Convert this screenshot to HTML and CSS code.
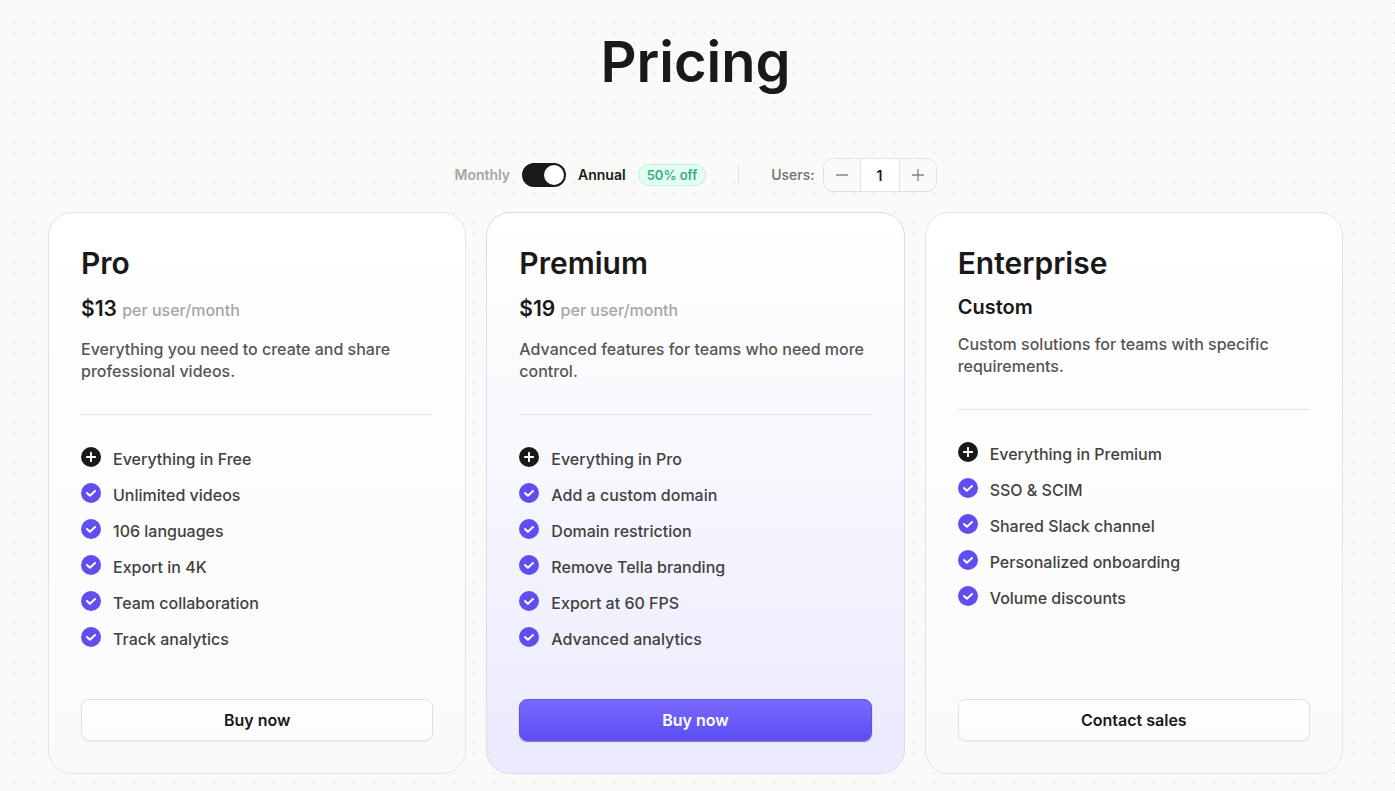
FILE: index.html
```html
<!DOCTYPE html>
<html lang="en">
<head>
    <meta charset="UTF-8">
    <meta name="viewport" content="width=device-width, initial-scale=1.0">
    <title>Pricing</title>
    <link rel="stylesheet" href="styles.css">
</head>
<body>

<!-- icons shared by the feature lists -->
<svg class="sprite" aria-hidden="true">
    <symbol id="icon-plus" viewBox="0 0 20 20">
        <circle cx="10" cy="10" r="10" fill="#1a1919"/>
        <path d="M10 5.8v8.4M5.8 10h8.4" fill="none" stroke="#fff" stroke-width="1.9" stroke-linecap="round"/>
    </symbol>
    <symbol id="icon-check" viewBox="0 0 20 20">
        <circle cx="10" cy="10" r="10" fill="#604fee"/>
        <path d="M6 10l2.9 2.8L14 8" fill="none" stroke="#fff" stroke-width="2" stroke-linecap="round" stroke-linejoin="round"/>
    </symbol>
</svg>

<main class="page">
    <h1 class="title">Pricing</h1>

    <form class="controls">
        <div class="billing">
            <span class="billing-off">Monthly</span>
            <input type="checkbox" class="switch" id="annual" checked>
            <label for="annual" class="billing-on">Annual</label>
            <span class="discount">50% off</span>
        </div>
        <div class="divider"></div>
        <div class="users">
            <label for="users">Users:</label>
            <div class="stepper">
                <button type="button" class="step" id="minus" aria-label="Remove user">
                    <svg width="14" height="14" viewBox="0 0 14 14"><path d="M1 7h12"/></svg>
                </button>
                <input type="text" class="count" id="users" value="1" inputmode="numeric">
                <button type="button" class="step" id="plus" aria-label="Add user">
                    <svg width="14" height="14" viewBox="0 0 14 14"><path d="M1 7h12M7 1v12"/></svg>
                </button>
            </div>
        </div>
    </form>

    <div class="plans">
        <section class="card">
            <h2>Pro</h2>
            <p class="price">$13 <span>per user/month</span></p>
            <p class="description">Everything you need to create and share professional videos.</p>
            <hr>
            <ul class="features">
                <li><svg><use href="#icon-plus"/></svg>Everything in Free</li>
                <li><svg><use href="#icon-check"/></svg>Unlimited videos</li>
                <li><svg><use href="#icon-check"/></svg>106 languages</li>
                <li><svg><use href="#icon-check"/></svg>Export in 4K</li>
                <li><svg><use href="#icon-check"/></svg>Team collaboration</li>
                <li><svg><use href="#icon-check"/></svg>Track analytics</li>
            </ul>
            <button type="button" class="button">Buy now</button>
        </section>

        <section class="card card-premium">
            <h2>Premium</h2>
            <p class="price">$19 <span>per user/month</span></p>
            <p class="description">Advanced features for teams who need more control.</p>
            <hr>
            <ul class="features">
                <li><svg><use href="#icon-plus"/></svg>Everything in Pro</li>
                <li><svg><use href="#icon-check"/></svg>Add a custom domain</li>
                <li><svg><use href="#icon-check"/></svg>Domain restriction</li>
                <li><svg><use href="#icon-check"/></svg>Remove Tella branding</li>
                <li><svg><use href="#icon-check"/></svg>Export at 60 FPS</li>
                <li><svg><use href="#icon-check"/></svg>Advanced analytics</li>
            </ul>
            <button type="button" class="button button-primary">Buy now</button>
        </section>

        <section class="card">
            <h2>Enterprise</h2>
            <p class="price price-custom">Custom</p>
            <p class="description">Custom solutions for teams with specific requirements.</p>
            <hr>
            <ul class="features">
                <li><svg><use href="#icon-plus"/></svg>Everything in Premium</li>
                <li><svg><use href="#icon-check"/></svg>SSO &amp; SCIM</li>
                <li><svg><use href="#icon-check"/></svg>Shared Slack channel</li>
                <li><svg><use href="#icon-check"/></svg>Personalized onboarding</li>
                <li><svg><use href="#icon-check"/></svg>Volume discounts</li>
            </ul>
            <button type="button" class="button">Contact sales</button>
        </section>
    </div>
</main>

<script>
    const users = document.getElementById("users");

    function changeUsers(step) {
        const count = parseInt(users.value) || 1;
        users.value = Math.max(1, count + step);
    }

    document.getElementById("minus").addEventListener("click", () => changeUsers(-1));
    document.getElementById("plus").addEventListener("click", () => changeUsers(1));
</script>

</body>
</html>
```
FILE: styles.css
```css
* {
    box-sizing: border-box;
}

body {
    margin: 0;
    font-family: 'Inter', sans-serif;
    font-size: 16px;
    font-weight: 450;
    line-height: 22px;
    color: #1a1919;
    background-color: #fafaf9;
    /* dotted paper */
    background-image:
        radial-gradient(circle at 14px 3px, #ebebe9 1px, transparent 1px),
        radial-gradient(circle at 4px 3px, #f4f4f2 1px, transparent 1px);
    background-size: 20px 10px, 10px 10px;
}

h1, h2, p, ul {
    margin: 0;
}

button, input {
    font-family: inherit;
    color: inherit;
}

.sprite {
    display: none;
}

.page {
    padding: 28px 52px 18px 48px;
}

.title {
    font-size: 56px;
    font-weight: 600;
    line-height: 68px;
    text-align: center;
}

.controls {
    display: flex;
    justify-content: center;
    align-items: center;
    gap: 32px;
    margin-top: 62px;
    font-size: 14px;
    font-weight: 500;
}

.billing {
    display: flex;
    align-items: center;
    gap: 12px;
}

.billing-off {
    color: #a8a5a3;
    font-weight: 600;
}

.billing-on {
    font-weight: 600;
}

.switch {
    appearance: none;
    display: flex;
    width: 44px;
    height: 24px;
    margin: 0;
    padding: 2px;
    border-radius: 12px;
    background-color: #a8a5a3;
    cursor: pointer;
}

.switch::before {
    content: "";
    width: 20px;
    height: 20px;
    border-radius: 50%;
    background-color: white;
}

.switch:checked {
    justify-content: flex-end;
    background-color: #1a1919;
}

.discount {
    padding: 0 8px;
    border: 1px solid #b8f5df;
    border-radius: 11px;
    font-size: 13px;
    line-height: 20px;
    font-weight: 600;
    color: #3dab82;
    background-color: #e3fdf3;
}

.divider {
    width: 1px;
    height: 20px;
    background-color: #e3e2e1;
}

.users {
    display: flex;
    align-items: center;
    gap: 8px;
    color: #72706d;
}

.stepper {
    display: flex;
    height: 34px;
    border: 1px solid #e3e2e1;
    border-radius: 10px;
    overflow: hidden;
    background-color: #fafafa;
}

.step {
    display: flex;
    justify-content: center;
    align-items: center;
    width: 36px;
    padding: 0;
    border: none;
    background: none;
    cursor: pointer;
}

.step path {
    fill: none;
    stroke: #858381;
    stroke-width: 1.3;
}

.count {
    width: 40px;
    padding: 0;
    border: solid #e3e2e1;
    border-width: 0 1px;
    font-size: 14px;
    font-weight: 600;
    text-align: center;
    color: #1a1919;
    background-color: white;
}

.plans {
    display: grid;
    grid-template-columns: repeat(3, 1fr);
    gap: 20px;
    margin-top: 20px;
}

.card {
    display: flex;
    flex-direction: column;
    padding: 32px;
    border: 1px solid #e5e4e3;
    border-radius: 24px;
    background: linear-gradient(#ffffff, #fafafa);
}

.card-premium {
    border-color: #dcdaf3;
    background: linear-gradient(#ffffff, #fafafe 33%, #ebeafe);
}

.card h2 {
    font-size: 30px;
    font-weight: 600;
    line-height: 36px;
}

.price {
    margin-top: 12px;
    font-size: 21px;
    font-weight: 600;
    line-height: 31px;
}

.price-custom {
    font-size: 20px;
    line-height: 28px;
}

.price span {
    font-size: 16px;
    font-weight: 500;
    color: #a8a5a3;
}

.description {
    margin-top: 12px;
    color: #575553;
}

.card hr {
    width: 100%;
    height: 1px;
    margin: 32px 0;
    border: none;
    background-color: #e3e2e5;
}

.features {
    display: flex;
    flex-direction: column;
    gap: 12px;
    padding: 0;
    margin-bottom: 48px;
    line-height: 24px;
    list-style: none;
    color: #434140;
}

.features li {
    display: flex;
    gap: 12px;
}

.features svg {
    width: 20px;
    height: 20px;
}

.button {
    height: 42px;
    margin-top: auto;
    border: 1px solid #e3e2e1;
    border-radius: 8px;
    font-size: 16px;
    font-weight: 600;
    background: linear-gradient(#ffffff, #fbfbfb);
    box-shadow: 0 1px 2px rgba(0, 0, 0, 0.06);
    cursor: pointer;
}

.button-primary {
    border-color: #6152dc;
    color: white;
    background: linear-gradient(#786aff, #5d4df2);
    box-shadow: 0 1px 1px #7a6de0;
}
```
